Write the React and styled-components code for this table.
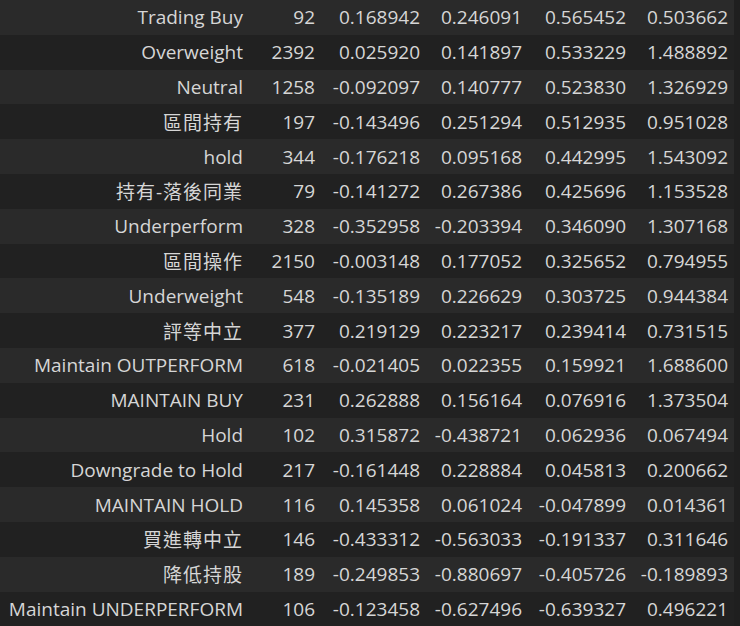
import React from 'react';
import styled, { createGlobalStyle } from 'styled-components';

const GlobalStyle = createGlobalStyle`
  html, body {
    margin: 0;
    padding: 0;
    background: #1f1f1f;
    overflow: hidden;
  }
`;

const rows = [
  ['Trading Buy', 92, '0.168942', '0.246091', '0.565452', '0.503662'],
  ['Overweight', 2392, '0.025920', '0.141897', '0.533229', '1.488892'],
  ['Neutral', 1258, '-0.092097', '0.140777', '0.523830', '1.326929'],
  ['區間持有', 197, '-0.143496', '0.251294', '0.512935', '0.951028'],
  ['hold', 344, '-0.176218', '0.095168', '0.442995', '1.543092'],
  ['持有-落後同業', 79, '-0.141272', '0.267386', '0.425696', '1.153528'],
  ['Underperform', 328, '-0.352958', '-0.203394', '0.346090', '1.307168'],
  ['區間操作', 2150, '-0.003148', '0.177052', '0.325652', '0.794955'],
  ['Underweight', 548, '-0.135189', '0.226629', '0.303725', '0.944384'],
  ['評等中立', 377, '0.219129', '0.223217', '0.239414', '0.731515'],
  ['Maintain OUTPERFORM', 618, '-0.021405', '0.022355', '0.159921', '1.688600'],
  ['MAINTAIN BUY', 231, '0.262888', '0.156164', '0.076916', '1.373504'],
  ['Hold', 102, '0.315872', '-0.438721', '0.062936', '0.067494'],
  ['Downgrade to Hold', 217, '-0.161448', '0.228884', '0.045813', '0.200662'],
  ['MAINTAIN HOLD', 116, '0.145358', '0.061024', '-0.047899', '0.014361'],
  ['買進轉中立', 146, '-0.433312', '-0.563033', '-0.191337', '0.311646'],
  ['降低持股', 189, '-0.249853', '-0.880697', '-0.405726', '-0.189893'],
  ['Maintain UNDERPERFORM', 106, '-0.123458', '-0.627496', '-0.639327', '0.496221'],
];

// 표 전체
const Table = styled.div`
  width: 734px;
  display: flex;
  flex-direction: column;
  font-family: 'Open Sans', 'Noto Sans CJK TC', sans-serif;
  font-size: 19px;
  color: #d6d6d6;
`;

// 한 줄
const Row = styled.div`
  display: grid;
  grid-template-columns: 249px 72px 105px 102px 104px 102px;
  height: 34.8px;
  align-items: center;
  background: ${(props) => (props.odd ? '#2a2a2a' : '#212121')};
`;

const Cell = styled.div`
  text-align: right;
  padding-right: 6px;
  white-space: nowrap;
  letter-spacing: ${(props) => (props.cjk ? '1px' : '0')};
`;

const hasCjk = (s) => /[\u3400-\u9fff]/.test(s);

export default function App() {
  return (
    <>
      <GlobalStyle />
      <Table>
        {rows.map((r, i) => (
          <Row key={r[0]} odd={i % 2 === 0}>
            <Cell cjk={hasCjk(r[0])}>{r[0]}</Cell>
            {r.slice(1).map((v, j) => (
              <Cell key={j}>{v}</Cell>
            ))}
          </Row>
        ))}
      </Table>
    </>
  );
}
